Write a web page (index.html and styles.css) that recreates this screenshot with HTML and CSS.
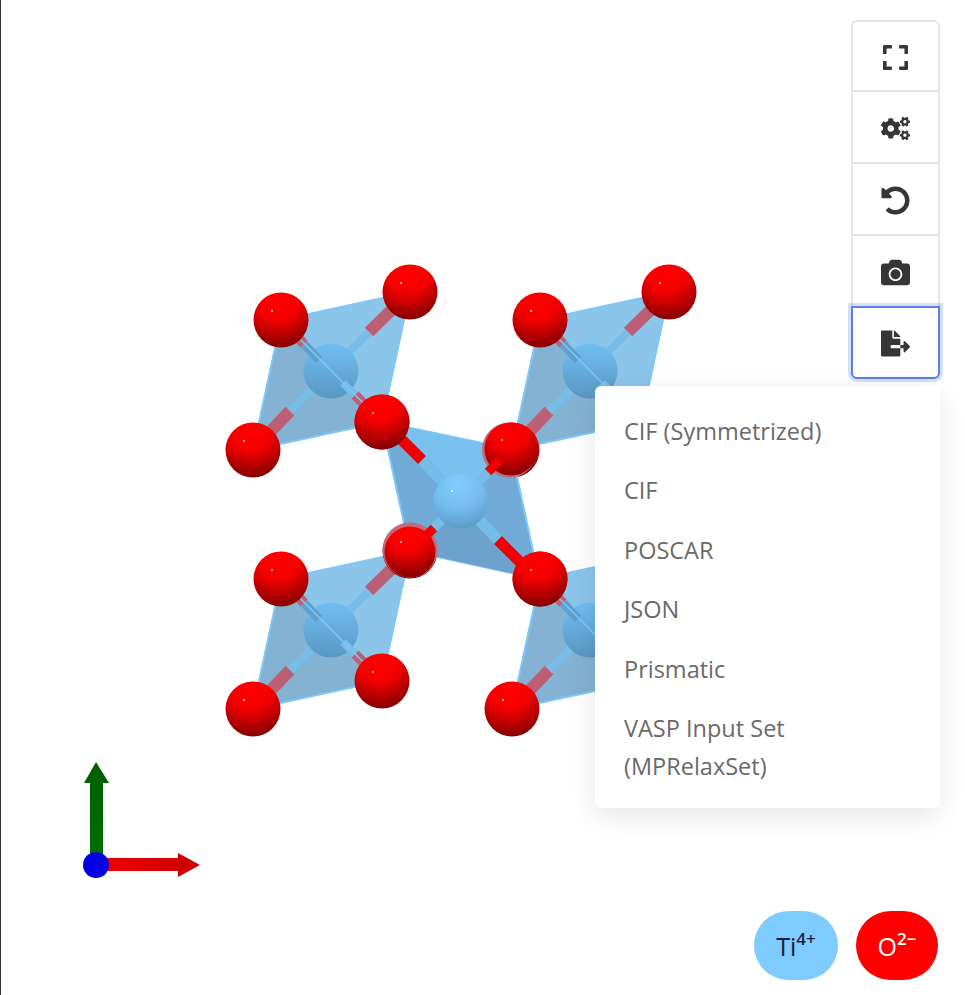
FILE: index.html

```html
<!DOCTYPE html>
<html lang="en">
<head>
    <meta charset="UTF-8">
    <meta name="viewport" content="width=device-width, initial-scale=1.0">
    <title>Structure</title>
    <link rel="stylesheet" href="styles.css">
</head>
<body>
<div class="viewer">
    <!-- Scene -->
    <svg class="scene" width="964" height="995" viewBox="1 0 964 995">
        <defs>
            <radialGradient id="oxygenFill" cx="0.45" cy="0.12" r="0.92">
                <stop offset="0" stop-color="#ff0000"/>
                <stop offset="0.42" stop-color="#f40000"/>
                <stop offset="1" stop-color="#7c0000"/>
            </radialGradient>
            <linearGradient id="tiBack" x1="0" y1="0" x2="0" y2="1">
                <stop offset="0" stop-color="#6fbff2"/>
                <stop offset="1" stop-color="#5a97c2"/>
            </linearGradient>
            <radialGradient id="tiFront" cx="0.45" cy="0.2" r="0.85">
                <stop offset="0" stop-color="#80ccff"/>
                <stop offset="0.5" stop-color="#76bdee"/>
                <stop offset="1" stop-color="#5b98c4"/>
            </radialGradient>
            <linearGradient id="redArrow" x1="0" y1="0" x2="1" y2="0">
                <stop offset="0" stop-color="#f40000"/>
                <stop offset="1" stop-color="#d00000"/>
            </linearGradient>
            <linearGradient id="greenArrow" x1="0" y1="1" x2="0" y2="0">
                <stop offset="0" stop-color="#007000"/>
                <stop offset="1" stop-color="#006000"/>
            </linearGradient>
            <g id="oxygen">
                <circle r="27.5" fill="url(#oxygenFill)"/>
                <circle cx="-9" cy="-9" r="1" fill="#fff" opacity="0.85"/>
            </g>
            <!-- one octahedron seen through its faces -->
            <g id="octa">
                <polygon points="281,320 253,450 382,422" fill="#84b2d3"/>
                <polygon points="281,320 410,292 382,422" fill="#8cc5ea"/>
                <polygon points="281,320 410,292 382,422 253,450" fill="none" stroke="#7cc8f8" stroke-width="2"/>
                <line class="bond-rose" x1="410" y1="292" x2="369" y2="332"/>
                <line class="bond-pale" x1="369" y1="332" x2="340" y2="361"/>
                <line class="bond-rose" x1="253" y1="450" x2="290" y2="411"/>
                <line class="bond-pale" x1="290" y1="411" x2="318" y2="384"/>
                <circle cx="331" cy="371" r="27.5" fill="url(#tiBack)"/>
                <line class="bond-rose thin" x1="281" y1="320" x2="304" y2="344"/>
                <line class="bond-dim" x1="304" y1="344" x2="319" y2="360"/>
                <line class="bond-rose thin" x1="382" y1="422" x2="355" y2="395"/>
                <line class="bond-pale" x1="355" y1="395" x2="343" y2="383"/>
                <line x1="281" y1="320" x2="382" y2="422" stroke="#7cc8f8" stroke-width="1.5"/>
                <use href="#oxygen" x="281" y="320"/>
                <use href="#oxygen" x="410" y="292"/>
                <use href="#oxygen" x="253" y="450"/>
                <use href="#oxygen" x="382" y="422"/>
            </g>
        </defs>

        <use href="#octa"/>
        <use href="#octa" transform="translate(259 0)"/>
        <use href="#octa" transform="translate(0 259)"/>
        <use href="#octa" transform="translate(259 259)"/>

        <!-- centre octahedron, in front -->
        <polygon points="382,422 511,449 539,579 410,551" fill="#71aad6" stroke="#7cc8f8" stroke-width="2"/>
        <polygon points="382,422 511,449 461,501" fill="#79c2ef"/>
        <polygon points="410,551 539,579 461,501" fill="#6ca2cb"/>
        <circle cx="509.5" cy="450" r="27.5" fill="#c2697b"/>
        <circle cx="511" cy="449" r="26.5" fill="url(#oxygenFill)"/>
        <circle cx="502" cy="440" r="1" fill="#fff" opacity="0.85"/>
        <circle cx="410" cy="550" r="27.5" fill="#c2697b"/>
        <circle cx="410" cy="552" r="25.5" fill="url(#oxygenFill)"/>
        <circle cx="401" cy="542" r="1" fill="#fff" opacity="0.85"/>
        <line class="bond-blue" x1="461" y1="501" x2="422" y2="460"/>
        <line class="bond-red" x1="422" y1="460" x2="390" y2="428"/>
        <line class="bond-blue" x1="461" y1="501" x2="498" y2="540"/>
        <line class="bond-red" x1="498" y1="540" x2="530" y2="572"/>
        <line class="bond-blue small" x1="461" y1="501" x2="488" y2="472"/>
        <line class="bond-red small" x1="488" y1="472" x2="500" y2="460"/>
        <line class="bond-blue small" x1="461" y1="501" x2="434" y2="528"/>
        <line class="bond-red small" x1="434" y1="528" x2="422" y2="540"/>
        <circle cx="461" cy="501" r="27.5" fill="url(#tiFront)"/>
        <circle cx="452" cy="491" r="1" fill="#fff" opacity="0.85"/>
        <use href="#oxygen" x="382" y="422"/>
        <use href="#oxygen" x="540" y="579"/>

        <!-- axes -->
        <rect x="90" y="782" width="13" height="83" fill="url(#greenArrow)"/>
        <polygon points="96,762 109,783 84,783" fill="#006000"/>
        <rect x="96" y="858" width="83" height="13" fill="url(#redArrow)"/>
        <polygon points="200,865 178,853 178,877" fill="#cc0000"/>
        <circle cx="96" cy="865" r="13" fill="#0000e0"/>
    </svg>

    <!-- Toolbar -->
    <div class="controls">
        <button class="tool first">
            <svg class="icon icon-narrow" viewBox="0 0 448 512"><path d="M0 180V56c0-13.3 10.7-24 24-24h124c6.6 0 12 5.4 12 12v40c0 6.6-5.4 12-12 12H64v84c0 6.6-5.4 12-12 12H12c-6.6 0-12-5.4-12-12zm288-136v40c0 6.6 5.4 12 12 12h84v84c0 6.6 5.4 12 12 12h40c6.6 0 12-5.4 12-12V56c0-13.3-10.7-24-24-24H300c-6.6 0-12 5.4-12 12zm148 276h-40c-6.6 0-12 5.4-12 12v84h-84c-6.6 0-12 5.4-12 12v40c0 6.6 5.4 12 12 12h124c13.3 0 24-10.7 24-24V332c0-6.6-5.4-12-12-12zM160 468v-40c0-6.6-5.4-12-12-12H64v-84c0-6.6-5.4-12-12-12H12c-6.6 0-12 5.4-12 12v124c0 13.3 10.7 24 24 24h124c6.6 0 12-5.4 12-12z"/></svg>
        </button>
        <button class="tool">
            <svg class="icon" viewBox="0 0 640 512"><path d="M512.1 191l-8.2 14.3c-3 5.3-9.4 7.5-15.1 5.4-11.8-4.4-22.6-10.7-32.1-18.6-4.6-3.8-5.8-10.5-2.8-15.7l8.2-14.3c-6.9-8-12.3-17.3-15.9-27.4h-16.5c-6 0-11.2-4.3-12.2-10.3-2-12-2.1-24.6 0-37.1 1-6 6.2-10.4 12.2-10.4h16.5c3.6-10.1 9-19.4 15.9-27.4l-8.2-14.3c-3-5.2-1.9-11.9 2.8-15.7 9.5-7.9 20.4-14.2 32.1-18.6 5.7-2.1 12.1.1 15.1 5.4l8.2 14.3c10.5-1.9 21.2-1.9 31.7 0L552 6.3c3-5.3 9.4-7.5 15.1-5.4 11.8 4.4 22.6 10.7 32.1 18.6 4.6 3.8 5.8 10.5 2.8 15.7l-8.2 14.3c6.9 8 12.3 17.3 15.9 27.4h16.5c6 0 11.2 4.3 12.2 10.3 2 12 2.1 24.6 0 37.1-1 6-6.2 10.4-12.2 10.4h-16.5c-3.6 10.1-9 19.4-15.9 27.4l8.2 14.3c3 5.2 1.9 11.9-2.8 15.7-9.5 7.9-20.4 14.2-32.1 18.6-5.7 2.1-12.1-.1-15.1-5.4l-8.2-14.3c-10.4 1.9-21.2 1.9-31.7 0zm-10.5-58.8c38.5 29.6 82.4-14.3 52.8-52.8-38.5-29.7-82.4 14.3-52.8 52.8zM386.3 286.1l33.7 16.8c10.1 5.8 14.5 18.1 10.5 29.1-8.9 24.2-26.4 46.4-42.6 65.8-7.4 8.9-20.2 11.1-30.3 5.3l-29.1-16.8c-16 13.7-34.6 24.6-54.9 31.7v33.6c0 11.6-8.3 21.6-19.7 23.6-24.6 4.2-50.4 4.4-75.9 0-11.5-2-20-11.9-20-23.6V418c-20.3-7.2-38.9-18-54.9-31.7L74 403c-10 5.8-22.9 3.6-30.3-5.3-16.2-19.4-33.3-41.6-42.2-65.7-4-10.9.4-23.2 10.5-29.1l33.3-16.8c-3.9-20.9-3.9-42.4 0-63.4L12 205.8c-10.1-5.8-14.6-18.1-10.5-29 8.9-24.2 26-46.4 42.2-65.8 7.4-8.9 20.2-11.1 30.3-5.3l29.1 16.8c16-13.7 34.6-24.6 54.9-31.7V57.1c0-11.5 8.2-21.5 19.6-23.5 24.6-4.2 50.5-4.4 76-.1 11.5 2 20 11.9 20 23.6v33.6c20.3 7.2 38.9 18 54.9 31.7l29.1-16.8c10-5.8 22.9-3.6 30.3 5.3 16.2 19.4 33.2 41.6 42.1 65.8 4 10.9.1 23.2-10 29.1l-33.7 16.8c3.9 21 3.9 42.5 0 63.5zm-117.6 21.1c59.2-77-28.7-164.9-105.7-105.7-59.2 77 28.7 164.9 105.7 105.7zm243.4 182.7l-8.2 14.3c-3 5.3-9.4 7.5-15.1 5.4-11.8-4.4-22.6-10.7-32.1-18.6-4.6-3.8-5.8-10.5-2.8-15.7l8.2-14.3c-6.9-8-12.3-17.3-15.9-27.4h-16.5c-6 0-11.2-4.3-12.2-10.3-2-12-2.1-24.6 0-37.1 1-6 6.2-10.4 12.2-10.4h16.5c3.6-10.1 9-19.4 15.9-27.4l-8.2-14.3c-3-5.2-1.9-11.9 2.8-15.7 9.5-7.9 20.4-14.2 32.1-18.6 5.7-2.1 12.1.1 15.1 5.4l8.2 14.3c10.5-1.9 21.2-1.9 31.7 0l8.2-14.3c3-5.3 9.4-7.5 15.1-5.4 11.8 4.4 22.6 10.7 32.1 18.6 4.6 3.8 5.8 10.5 2.8 15.7l-8.2 14.3c6.9 8 12.3 17.3 15.9 27.4h16.5c6 0 11.2 4.3 12.2 10.3 2 12 2.1 24.6 0 37.1-1 6-6.2 10.4-12.2 10.4h-16.5c-3.6 10.1-9 19.4-15.9 27.4l8.2 14.3c3 5.2 1.9 11.9-2.8 15.7-9.5 7.9-20.4 14.2-32.1 18.6-5.7 2.1-12.1-.1-15.1-5.4l-8.2-14.3c-10.4 1.9-21.2 1.9-31.7 0zM501.6 431c38.5 29.6 82.4-14.3 52.8-52.8-38.5-29.6-82.4 14.3-52.8 52.8z"/></svg>
        </button>
        <button class="tool">
            <svg class="icon" viewBox="0 0 512 512"><path d="M255.545 8c-66.269.119-126.438 26.233-170.86 68.685L48.971 40.971C33.851 25.851 8 36.559 8 57.941V192c0 13.255 10.745 24 24 24h134.059c21.382 0 32.09-25.851 16.971-40.971l-41.75-41.75c30.864-28.899 70.801-44.907 113.23-45.273 92.398-.798 170.283 73.977 169.484 169.442C423.236 348.009 349.816 424 256 424c-41.127 0-79.997-14.678-110.63-41.556-4.743-4.161-11.906-3.908-16.368.553L89.34 422.659c-4.872 4.872-4.631 12.815.482 17.433C133.798 479.813 192.074 504 256 504c136.966 0 247.999-111.033 248-247.998C504.001 119.193 392.354 7.755 255.545 8z"/></svg>
        </button>
        <button class="tool">
            <svg class="icon" viewBox="0 0 512 512"><path d="M512 144v288c0 26.5-21.5 48-48 48H48c-26.5 0-48-21.5-48-48V144c0-26.5 21.5-48 48-48h88l12.3-32.9c7-18.7 24.9-31.1 44.9-31.1h125.5c20 0 37.9 12.4 44.9 31.1L376 96h88c26.5 0 48 21.5 48 48zM376 288c0-66.2-53.8-120-120-120s-120 53.8-120 120 53.8 120 120 120 120-53.8 120-120zm-32 0c0 48.5-39.5 88-88 88s-88-39.5-88-88 39.5-88 88-88 88 39.5 88 88z"/></svg>
        </button>
        <div class="export">
            <button class="tool active">
                <svg class="icon" viewBox="0 0 576 512"><path d="M384 121.9c0-6.3-2.5-12.4-7-16.9L279.1 7c-4.5-4.5-10.6-7-17-7H256v128h128v-6.1zM192 336v-32c0-8.84 7.16-16 16-16h176V160H248c-13.2 0-24-10.8-24-24V0H24C10.7 0 0 10.7 0 24v464c0 13.3 10.7 24 24 24h336c13.3 0 24-10.7 24-24V352H208c-8.84 0-16-7.16-16-16zm379.05-28.02l-95.7-96.43c-10.06-10.14-27.36-3.01-27.36 11.27V288H384v64h63.99v65.18c0 14.28 17.29 21.41 27.36 11.27l95.7-96.42c6.6-6.66 6.6-17.4 0-24.05z"/></svg>
            </button>
            <div class="menu">
                <a class="menu-item">CIF (Symmetrized)</a>
                <a class="menu-item">CIF</a>
                <a class="menu-item">POSCAR</a>
                <a class="menu-item">JSON</a>
                <a class="menu-item">Prismatic</a>
                <a class="menu-item">VASP Input Set (MPRelaxSet)</a>
            </div>
        </div>
    </div>

    <!-- Legend -->
    <div class="legend">
        <span class="species ti">Ti<sup>4+</sup></span>
        <span class="species oxygen">O<sup>2−</sup></span>
    </div>
</div>
</body>
</html>
```

FILE: styles.css

```css
body {
    margin: 0;
    padding: 0;
    background-color: #fff;
    font-family: "Open Sans", Arial, sans-serif;
}
.viewer {
    position: relative;
    height: 995px;
    border-left: 1px solid #333;
    overflow: hidden;
}
.scene {
    position: absolute;
    top: 0;
    left: 0;
    filter: blur(0.5px);
}
.bond-rose {
    stroke: #bd5f74;
    stroke-width: 12;
}
.bond-rose.thin {
    stroke-width: 10;
}
.bond-pale {
    stroke: #78bde8;
    stroke-width: 8;
}
.bond-dim {
    stroke: #5fa0cf;
    stroke-width: 9;
}
.bond-blue {
    stroke: #74bde9;
    stroke-width: 11;
}
.bond-red {
    stroke: #f00000;
    stroke-width: 11;
}
.bond-blue.small,
.bond-red.small {
    stroke-width: 9;
}
.controls {
    position: absolute;
    top: 20px;
    right: 25px;
    width: 89px;
    display: flex;
    flex-direction: column;
}
.tool {
    box-sizing: border-box;
    width: 89px;
    height: 72px;
    padding: 2px 0 0;
    display: flex;
    align-items: center;
    justify-content: center;
    background-color: #fff;
    border: 2px solid #e6e6e6;
    border-top: none;
}
.tool.first {
    border-top: 2px solid #e6e6e6;
    border-radius: 6px 6px 0 0;
}
.tool.active {
    height: 73px;
    border: 2px solid #5c7fe8;
    border-radius: 0 0 6px 6px;
    box-shadow: 0 0 0 3px rgba(92, 127, 232, 0.25);
}
.icon {
    width: 29px;
    height: 29px;
    fill: #363636;
    filter: blur(0.4px);
}
.icon-narrow {
    width: 25px;
}
.export {
    position: relative;
    margin-top: -2px;
}
.menu {
    position: absolute;
    top: 80px;
    right: 0;
    box-sizing: border-box;
    width: 345px;
    height: 422px;
    padding: 15px 0 11px;
    background-color: #fff;
    border-radius: 6px;
    box-shadow: 0 8px 30px rgba(0, 0, 0, 0.1);
}
.menu-item {
    display: block;
    padding: 10.75px 29px;
    font-size: 23.5px;
    line-height: 38px;
    color: #6a6a6a;
}
.legend {
    position: absolute;
    right: 27px;
    bottom: 15px;
    display: flex;
    gap: 18px;
}
.species {
    width: 82px;
    height: 69px;
    display: flex;
    align-items: center;
    justify-content: center;
    border-radius: 35px;
    font-size: 25px;
}
.species sup {
    font-size: 17px;
    font-weight: 600;
    margin-top: -14px;
    align-self: center;
}
.ti {
    width: 84px;
    background-color: #7ecbff;
    color: #1c1c3c;
}
.oxygen {
    background-color: #ff0000;
    color: #fff;
}
```
